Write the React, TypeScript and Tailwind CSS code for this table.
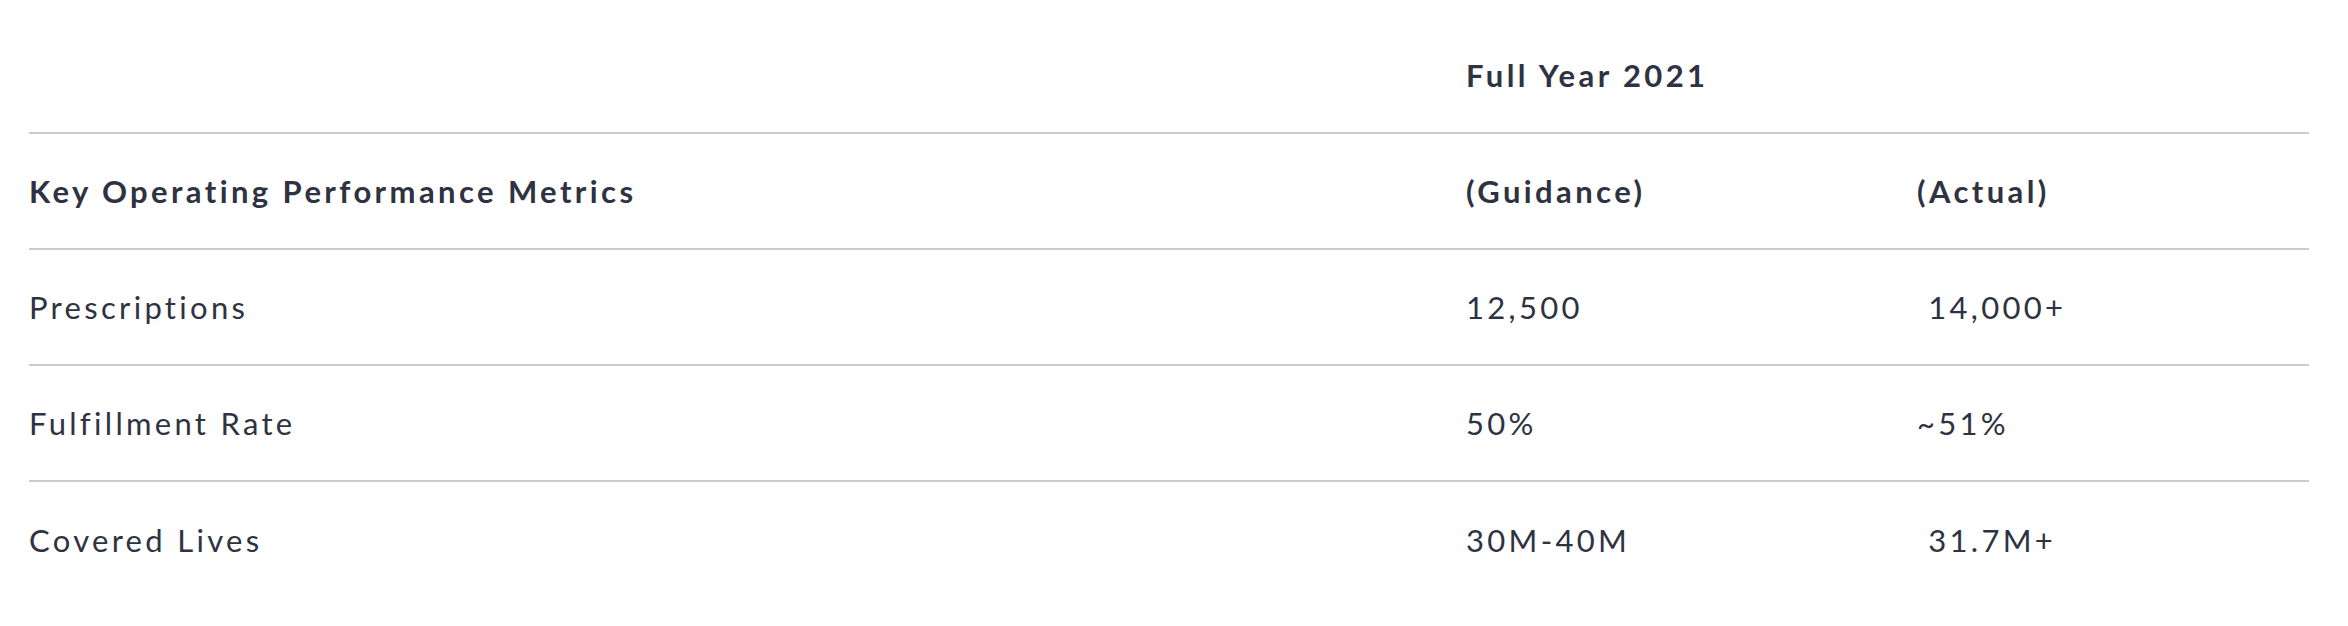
import React from 'react';

const rows = [
  { label: 'Prescriptions', guidance: '12,500', actual: '\u00a014,000+' },
  { label: 'Fulfillment Rate', guidance: '50%', actual: '~51%' },
  { label: 'Covered Lives', guidance: '30M-40M', actual: '\u00a031.7M+' },
];

const cols = 'grid grid-cols-[1437px_451px_1fr] items-center';

const App: React.FC = () => {
  return (
    <div
      className="min-h-screen bg-white pt-[18px] text-[#2e3241] text-[31px] tracking-[3.3px]"
      style={{ fontFamily: 'Lato, "Open Sans", sans-serif' }}
    >
      <div className="ml-[29px] w-[2280px]">
        {/* header: period */}
        <div className={`${cols} h-[116px] border-b-2 border-[#cccccc] font-bold tracking-[3.4px]`}>
          <div />
          <div>Full Year 2021</div>
          <div />
        </div>

        {/* header: column labels */}
        <div className={`${cols} h-[116px] border-b-2 border-[#cccccc] font-bold tracking-[3.4px]`}>
          <div>Key Operating Performance Metrics</div>
          <div>(Guidance)</div>
          <div>(Actual)</div>
        </div>

        {rows.map((r, i) => (
          <div
            key={r.label}
            className={`${cols} h-[116px] ${i < rows.length - 1 ? 'border-b-2 border-[#cccccc]' : ''}`}
          >
            <div>{r.label}</div>
            <div>{r.guidance}</div>
            <div className="whitespace-pre">{r.actual}</div>
          </div>
        ))}
      </div>
    </div>
  );
};

export default App;
